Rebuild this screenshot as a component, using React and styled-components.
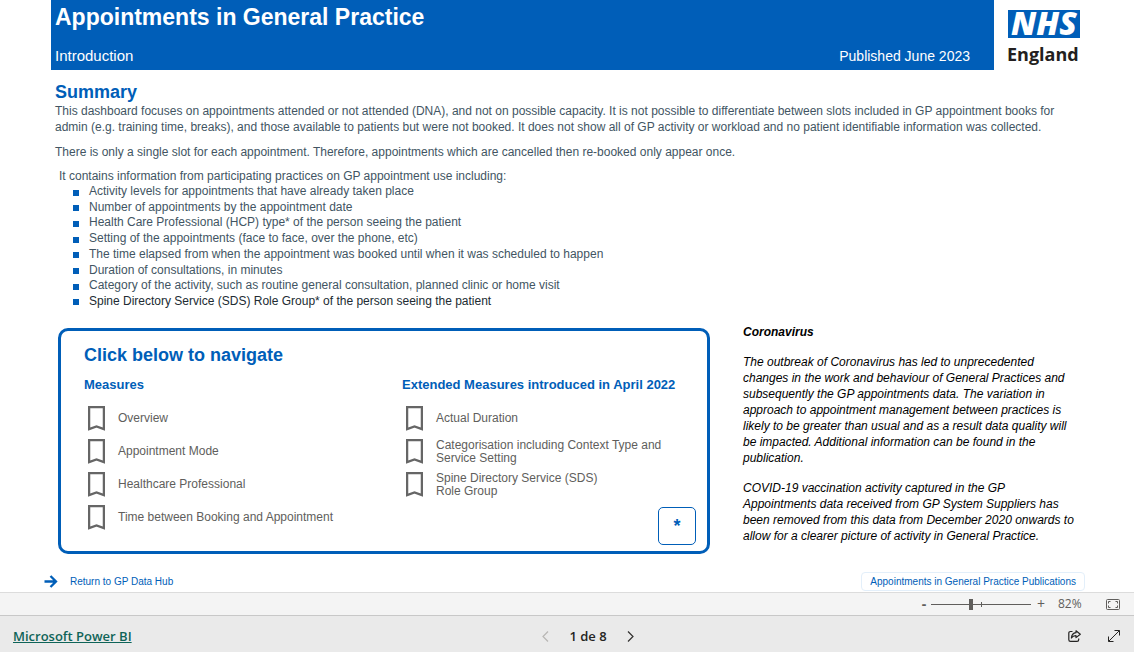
import React, { useState } from "react";
import styled, { createGlobalStyle } from "styled-components";

const GlobalStyle = createGlobalStyle`
  * {
    box-sizing: border-box;
  }

  body {
    margin: 0;
    background-color: #fff;
    font-family: "Liberation Sans", Arial, sans-serif;
    font-size: 12px;
    line-height: 16px;
    color: #425563;
  }

  h1, h2, h3, p, ul {
    margin: 0;
    padding: 0;
  }

  button {
    padding: 0;
    border: none;
    background: none;
    font: inherit;
    color: inherit;
    cursor: pointer;
  }
`;

const Shell = styled.div`
  display: flex;
  flex-direction: column;
  min-height: 100vh;
`;

const Report = styled.main`
  flex: 1;
  display: flex;
  flex-direction: column;
  padding: 0 50px 0 51px;
`;

const Header = styled.header`
  display: flex;
`;

const Banner = styled.div`
  flex: 1;
  display: flex;
  flex-direction: column;
  justify-content: space-between;
  height: 70px;
  padding: 4px 24px 4px 4px;
  background-color: #005eb8;
  color: #fff;
`;

const Title = styled.h1`
  font-size: 23px;
  line-height: 26px;
`;

const BannerRow = styled.div`
  display: flex;
  align-items: center;
  justify-content: space-between;
  font-size: 15px;
  line-height: 20px;
`;

const Published = styled.span`
  font-size: 14px;
`;

const Logo = styled.svg`
  width: 76px;
  height: 60px;
  margin: 10px 0 0 14px;
  overflow: visible;
  font-family: "Open Sans", sans-serif;
`;

const Heading = styled.h2`
  color: #005eb8;
  font-size: 18px;
  line-height: 22px;
`;

const Summary = styled.section`
  padding: 11px 0 0 4px;
`;

const Paragraph = styled.p`
  margin-bottom: 9px;
`;

const ListIntro = styled.p`
  margin-top: -1px;
  padding-left: 4px;
`;

const BulletList = styled.ul`
  display: flex;
  flex-direction: column;
  justify-content: space-between;
  min-height: 125px;
  list-style: none;
  line-height: 15px;
`;

const Bullet = styled.li`
  display: flex;
  align-items: center;
  gap: 10px;
  padding-left: 18px;
  color: ${(props) => (props.$dark ? "#212b32" : "#425563")};

  &::before {
    content: "";
    width: 6px;
    height: 6px;
    margin-top: 2px;
    background-color: #005eb8;
  }
`;

const Columns = styled.div`
  display: flex;
  align-items: flex-start;
  gap: 33px;
  padding: 15px 7px 0;
`;

const NavCard = styled.nav`
  flex: 1;
  min-height: 226px;
  margin-top: 4px;
  padding: 13px 11px 6px 23px;
  border: 3px solid #005eb8;
  border-radius: 10px;
`;

const Measures = styled.div`
  display: grid;
  grid-template-columns: 318px 1fr;
  padding-top: 11px;
`;

const ColumnTitle = styled.h3`
  margin-bottom: 9px;
  color: #005eb8;
  font-size: 13px;
  line-height: 16px;
`;

const Measure = styled.button`
  display: flex;
  align-items: center;
  gap: 13px;
  height: 33px;
  padding-left: 4px;
  color: #605e5c;
  line-height: 13px;
  text-align: left;
  white-space: pre-line;
`;

const MeasureGroup = styled.div`
  display: flex;
  flex-direction: column;
  align-items: flex-start;
`;

const StarButton = styled.button`
  display: block;
  width: 38px;
  height: 38px;
  border: 1px solid #005eb8;
  border-radius: 5px;
  color: #005eb8;
  font-size: 18px;
  font-weight: 700;
`;

const CardFooter = styled.div`
  display: flex;
  justify-content: flex-end;
  margin-top: -27px;
`;

const Notice = styled.aside`
  width: 334px;
  color: #000;
  font-style: italic;

  h3 {
    font-size: 12px;
    line-height: 16px;
  }

  p {
    margin-top: 14px;
  }
`;

const LinkRow = styled.div`
  display: flex;
  align-items: center;
  justify-content: space-between;
  margin: auto -1px 1px -7px;
`;

const SmallLink = styled.a`
  display: flex;
  align-items: center;
  gap: 12px;
  height: 19px;
  color: #005eb8;
  font-size: 10px;
  text-decoration: none;
`;

const BoxedLink = styled(SmallLink)`
  padding: 0 8px;
  border: 1px solid #e3effa;
  border-radius: 4px;
`;

const ZoomBar = styled.div`
  display: flex;
  align-items: center;
  justify-content: flex-end;
  height: 23px;
  padding-right: 14px;
  border-top: 1px solid #dcdcdc;
  background-color: #f4f4f4;
  color: #605e5c;
  font-family: "Open Sans", sans-serif;
  font-size: 12px;
`;

const ZoomButton = styled.button`
  width: 14px;
  font-size: 14px;
  font-weight: ${(props) => (props.$bold ? 700 : 400)};
`;

const ZoomRange = styled.input`
  appearance: none;
  width: 100px;
  height: 12px;
  margin: 0 3px 0 0;
  background:
    linear-gradient(#605e5c, #605e5c) center / 1px 5px no-repeat,
    linear-gradient(#605e5c, #605e5c) center / 100% 1px no-repeat;

  &::-webkit-slider-thumb {
    appearance: none;
    width: 4px;
    height: 11px;
    background-color: #605e5c;
  }
`;

const ZoomValue = styled.output`
  width: 54px;
  padding-left: 10px;
`;

const FitButton = styled.button`
  display: flex;
  margin-left: 4px;
`;

const PageBar = styled.footer`
  display: grid;
  grid-template-columns: 1fr auto 1fr;
  align-items: center;
  height: 37px;
  padding: 4px 14px 0 13px;
  border-top: 1px solid #c8c8c8;
  background-color: #eaeaea;
  color: #252423;
  font-family: "Open Sans", sans-serif;
  font-size: 13px;
  font-weight: 600;
`;

const BrandLink = styled.a`
  justify-self: start;
  color: #0f6458;
`;

const Pager = styled.div`
  display: flex;
  align-items: center;
  gap: 20px;
  padding-left: 43px;
`;

const PageButton = styled.button`
  display: flex;
  color: #323130;

  &:disabled {
    color: #b8b6b4;
  }
`;

const PageTools = styled.div`
  display: flex;
  justify-content: flex-end;
  gap: 27px;
`;

const measures = [
  "Overview",
  "Appointment Mode",
  "Healthcare Professional",
  "Time between Booking and Appointment",
];

const extendedMeasures = [
  "Actual Duration",
  "Categorisation including Context Type and\nService Setting",
  "Spine Directory Service (SDS)\nRole Group",
];

const bullets = [
  "Activity levels for appointments that have already taken place",
  "Number of appointments by the appointment date",
  "Health Care Professional (HCP) type* of the person seeing the patient",
  "Setting of the appointments (face to face, over the phone, etc)",
  "The time elapsed from when the appointment was booked until when it was scheduled to happen",
  "Duration of consultations, in minutes",
  "Category of the activity, such as routine general consultation, planned clinic or home visit",
  "Spine Directory Service (SDS) Role Group* of the person seeing the patient",
];

const NhsLogo = () => (
  <Logo viewBox="0 0 76 60" role="img" aria-label="NHS England">
    <rect width="72" height="28" fill="#005eb8" />
    <text x="3" y="25" fill="#fff" fontSize="32" fontWeight="800" fontStyle="italic">
      NHS
    </text>
    <text x="-1" y="51" fill="#231f20" fontSize="18" fontWeight="700">
      England
    </text>
  </Logo>
);

const BookmarkIcon = () => (
  <svg width="17" height="25" viewBox="0 0 17 25" fill="none" stroke="#666" strokeWidth="2.3">
    <path d="M1.1 1.1H15.9V23.2L8.5 20.5L1.1 23.2Z" />
  </svg>
);

const ArrowIcon = () => (
  <svg width="14" height="13" viewBox="0 0 14 13" fill="none" stroke="#005eb8" strokeWidth="2.3">
    <path d="M0.5 6.5H12M6.5 1L12 6.5L6.5 12" />
  </svg>
);

const FitIcon = () => (
  <svg width="14" height="11" viewBox="0 0 14 11" fill="none" stroke="#605e5c">
    <rect x="0.5" y="0.5" width="13" height="10" rx="1" />
    <path d="M4.5 2.5H2.5V4.5M9.5 2.5H11.5V4.5M4.5 8.5H2.5V6.5M9.5 8.5H11.5V6.5" />
  </svg>
);

const ChevronIcon = ({ flip }) => (
  <svg width="7" height="11" viewBox="0 0 7 11" fill="none" stroke="currentColor" strokeWidth="1.2">
    <path d={flip ? "M6 0.5L1 5.5L6 10.5" : "M1 0.5L6 5.5L1 10.5"} />
  </svg>
);

const ShareIcon = () => (
  <svg width="13" height="12" viewBox="0 0 13 12" fill="none" stroke="#252423" strokeWidth="1.2" strokeLinejoin="round">
    <path d="M4.5 1.5H2.5Q0.8 1.5 0.8 3.2V9.7Q0.8 11.4 2.5 11.4H9Q10.7 11.4 10.7 9.7V8.5" />
    <path d="M8 0.8L12.3 4.2L8 7.6V5.7Q5 5.6 3.4 8Q3.8 3.2 8 2.7Z" />
  </svg>
);

const ExpandIcon = () => (
  <svg width="12" height="12" viewBox="0 0 12 12" fill="none" stroke="#252423">
    <path d="M0.7 11.3L11.3 0.7M6.5 0.5H11.5V5.5M0.5 6.5V11.5H5.5" />
  </svg>
);

const MeasureColumn = ({ title, items }) => (
  <MeasureGroup>
    <ColumnTitle>{title}</ColumnTitle>
    {items.map((item) => (
      <Measure key={item} type="button">
        <BookmarkIcon />
        <span>{item}</span>
      </Measure>
    ))}
  </MeasureGroup>
);

const App = () => {
  const [zoom, setZoom] = useState(82);
  const [page, setPage] = useState(1);

  return (
    <>
      <GlobalStyle />
      <Shell>
        <Report>
          <Header>
            <Banner>
              <Title>Appointments in General Practice</Title>
              <BannerRow>
                <span>Introduction</span>
                <Published>Published June 2023</Published>
              </BannerRow>
            </Banner>
            <NhsLogo />
          </Header>

          <Summary>
            <Heading>Summary</Heading>
            <Paragraph>
              This dashboard focuses on appointments attended or not attended (DNA), and not on possible capacity. It is
              not possible to differentiate between slots included in GP appointment books for admin (e.g. training
              time, breaks), and those available to patients but were not booked. It does not show all of GP activity or
              workload and no patient identifiable information was collected.
            </Paragraph>
            <Paragraph>
              There is only a single slot for each appointment. Therefore, appointments which are cancelled then
              re-booked only appear once.
            </Paragraph>
            <ListIntro>It contains information from participating practices on GP appointment use including:</ListIntro>
            <BulletList>
              {bullets.map((text, index) => (
                <Bullet key={text} $dark={index === bullets.length - 1}>
                  {text}
                </Bullet>
              ))}
            </BulletList>
          </Summary>

          <Columns>
            <NavCard>
              <Heading>Click below to navigate</Heading>
              <Measures>
                <MeasureColumn title="Measures" items={measures} />
                <MeasureColumn title="Extended Measures introduced in April 2022" items={extendedMeasures} />
              </Measures>
              <CardFooter>
                <StarButton type="button">*</StarButton>
              </CardFooter>
            </NavCard>
            <Notice>
              <h3>Coronavirus</h3>
              <p>
                The outbreak of Coronavirus has led to unprecedented changes in the work and behaviour of General
                Practices and subsequently the GP appointments data. The variation in approach to appointment management
                between practices is likely to be greater than usual and as a result data quality will be impacted.
                Additional information can be found in the publication.
              </p>
              <p>
                COVID-19 vaccination activity captured in the GP Appointments data received from GP System Suppliers has
                been removed from this data from December 2020 onwards to allow for a clearer picture of activity in
                General Practice.
              </p>
            </Notice>
          </Columns>

          <LinkRow>
            <SmallLink href="#hub">
              <ArrowIcon />
              Return to GP Data Hub
            </SmallLink>
            <BoxedLink href="#publications">Appointments in General Practice Publications</BoxedLink>
          </LinkRow>
        </Report>

        <ZoomBar>
          <ZoomButton type="button" $bold aria-label="Zoom out" onClick={() => setZoom(Math.max(10, zoom - 10))}>
            -
          </ZoomButton>
          <ZoomRange
            type="range"
            aria-label="Zoom"
            min="10"
            max="190"
            value={zoom}
            onChange={(e) => setZoom(Number(e.target.value))}
          />
          <ZoomButton type="button" aria-label="Zoom in" onClick={() => setZoom(Math.min(190, zoom + 10))}>
            +
          </ZoomButton>
          <ZoomValue>{zoom}%</ZoomValue>
          <FitButton type="button" aria-label="Fit to page" onClick={() => setZoom(82)}>
            <FitIcon />
          </FitButton>
        </ZoomBar>

        <PageBar>
          <BrandLink href="#powerbi">Microsoft Power BI</BrandLink>
          <Pager>
            <PageButton type="button" aria-label="Previous page" disabled={page === 1} onClick={() => setPage(page - 1)}>
              <ChevronIcon flip />
            </PageButton>
            <span>{page} de 8</span>
            <PageButton type="button" aria-label="Next page" disabled={page === 8} onClick={() => setPage(page + 1)}>
              <ChevronIcon />
            </PageButton>
          </Pager>
          <PageTools>
            <PageButton type="button" aria-label="Share">
              <ShareIcon />
            </PageButton>
            <PageButton type="button" aria-label="Full screen">
              <ExpandIcon />
            </PageButton>
          </PageTools>
        </PageBar>
      </Shell>
    </>
  );
};

export default App;
